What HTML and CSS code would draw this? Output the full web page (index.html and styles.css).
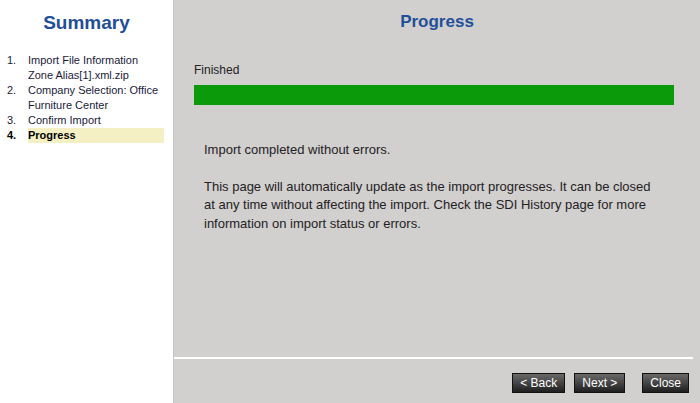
FILE: index.html
```html
<!DOCTYPE html>
<html lang="en">
<head>
  <meta charset="UTF-8">
  <title>Import Progress</title>
  <link rel="stylesheet" href="styles.css">
</head>
<body>
  <div class="wizard">
    <aside class="summary">
      <h2>Summary</h2>
      <ol class="steps">
        <li><span class="num">1.</span><span>Import File Information<br>Zone Alias[1].xml.zip</span></li>
        <li><span class="num">2.</span><span>Company Selection: Office<br>Furniture Center</span></li>
        <li><span class="num">3.</span><span>Confirm Import</span></li>
        <li class="current"><span class="num">4.</span><span class="label">Progress</span></li>
      </ol>
    </aside>

    <main class="content">
      <h1>Progress</h1>
      <div class="status">Finished</div>
      <div class="bar"><div class="fill" style="width: 100%"></div></div>

      <div class="messages">
        <p>Import completed without errors.</p>
        <p>This page will automatically update as the import progresses. It can be closed at any time without affecting the import. Check the SDI History page for more information on import status or errors.</p>
      </div>

      <footer class="buttons">
        <button class="btn">&lt; Back</button>
        <button class="btn">Next &gt;</button>
        <button class="btn close">Close</button>
      </footer>
    </main>
  </div>
</body>
</html>
```

FILE: styles.css
```css
html, body {
  margin: 0;
  padding: 0;
  height: 100%;
}
body {
  font-family: "Liberation Sans", Arial, sans-serif;
  background-color: #fff;
}
.wizard {
  display: flex;
  height: 403px;
}
.summary {
  width: 173px;
  background-color: #fff;
  border-right: 1px solid #c8c4c4;
  flex-shrink: 0;
}
.summary h2 {
  margin: 12px 0 0;
  text-align: center;
  font-size: 19px;
  color: #1f4f98;
}
.steps {
  list-style: none;
  margin: 19px 0 0;
  padding: 0;
  font-size: 11px;
  line-height: 15px;
  color: #1a1a3a;
}
.steps li {
  display: flex;
}
.steps .num {
  width: 21px;
  padding-left: 7px;
  flex-shrink: 0;
}
.steps .current {
  font-weight: bold;
  color: #000;
}
.steps .current .label {
  flex: 1;
  margin-right: 9px;
  background-color: #f4f0c4;
}
.content {
  flex: 1;
  background-color: #d2cfcf;
  display: flex;
  flex-direction: column;
}
.content h1 {
  margin: 12px 0 0;
  text-align: center;
  font-size: 17px;
  color: #1f4f98;
}
.status {
  margin: 31px 0 0 20px;
  font-size: 12px;
  color: #222;
}
.bar {
  margin: 8px 26px 0 20px;
  height: 20px;
}
.fill {
  height: 100%;
  background-color: #0a9a0a;
}
.messages {
  margin: 36px 0 0 30px;
  width: 460px;
  font-size: 13px;
  line-height: 18.5px;
  color: #222;
  flex: 1;
}
.messages p {
  margin: 0 0 18px;
}
.buttons {
  border-top: 2px solid #fff;
  margin-right: 7px;
  display: flex;
  justify-content: flex-end;
  padding: 14px 4px 0 0;
  height: 30px;
  gap: 9px;
}
.btn {
  font-family: "Liberation Sans", Arial, sans-serif;
  font-size: 12px;
  color: #fff;
  height: 20px;
  padding: 0 7px;
  border: 1px solid #111;
  background: linear-gradient(#6a6a6a, #1e1e1e);
  cursor: pointer;
}
.btn.close {
  margin-left: 8px;
}
```
